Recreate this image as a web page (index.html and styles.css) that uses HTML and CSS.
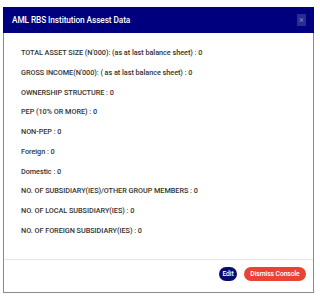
FILE: index.html
```html
<!DOCTYPE html>
<html>
<head>
<meta charset="utf-8">
<link rel="stylesheet" href="styles.css">
</head>
<body>
<div class="modal">
  <div class="modal-header">
    <span class="title">AML RBS Institution Assest Data</span>
    <span class="close">&times;</span>
  </div>
  <div class="modal-body">
    <div class="row">TOTAL ASSET SIZE (N'000): (as at last balance sheet) : 0</div>
    <div class="row">GROSS INCOME(N'000): ( as at last balance sheet) : 0</div>
    <div class="row">OWNERSHIP STRUCTURE : 0</div>
    <div class="row">PEP (10% OR MORE) : 0</div>
    <div class="row">NON-PEP : 0</div>
    <div class="row">Foreign : 0</div>
    <div class="row">Domestic : 0</div>
    <div class="row">NO. OF SUBSIDIARY(IES)/OTHER GROUP MEMBERS : 0</div>
    <div class="row">NO. OF LOCAL SUBSIDIARY(IES) : 0</div>
    <div class="row">NO. OF FOREIGN SUBSIDIARY(IES) : 0</div>
  </div>
  <div class="modal-footer">
    <button class="btn btn-edit">Edit</button>
    <button class="btn btn-dismiss">Dismiss Console</button>
  </div>
</div>
</body>
</html>
```
FILE: styles.css
```css
html, body {
  margin: 0;
  padding: 0;
  background: #ffffff;
}
body {
  font-family: Roboto, "Liberation Sans", sans-serif;
  padding: 7px 0 0 3px;
}
.modal {
  width: 309px;
  height: 285px;
  border: 1px solid #8a8a8a;
  border-top: none;
  display: flex;
  flex-direction: column;
  background: #fff;
}
.modal-header {
  height: 26px;
  margin: 0 -1px;
  background: #00007e;
  color: #fff;
  display: flex;
  align-items: center;
  justify-content: space-between;
  padding: 0 8px 0 9px;
}
.title {
  font-size: 8.3px;
  font-weight: 500;
  letter-spacing: -0.1px;
}
.close {
  width: 9px;
  height: 12px;
  background: #2b2b95;
  color: #8585c0;
  font-size: 9px;
  line-height: 12px;
  text-align: center;
}
.modal-body {
  flex: 1;
  padding: 10px 0 0 17px;
}
.row {
  height: 19.75px;
  line-height: 19.75px;
  font-size: 7.3px;
  font-weight: 500;
  color: #333;
  letter-spacing: -0.05px;
}
.modal-footer {
  border-top: 1px solid #e6e6e6;
  display: flex;
  justify-content: flex-end;
  gap: 7px;
  padding: 7px 7px 11px 0;
}
.btn {
  border: none;
  height: 14px;
  border-radius: 7px;
  color: #fff;
  font-family: Roboto, "Liberation Sans", sans-serif;
  font-size: 6.8px;
  font-weight: 500;
  padding: 0;
  line-height: 14px;
  letter-spacing: -0.1px;
}
.btn-edit {
  width: 18px;
  background: #0b0b6e;
}
.btn-dismiss {
  width: 62px;
  background: #ea4335;
}
```
